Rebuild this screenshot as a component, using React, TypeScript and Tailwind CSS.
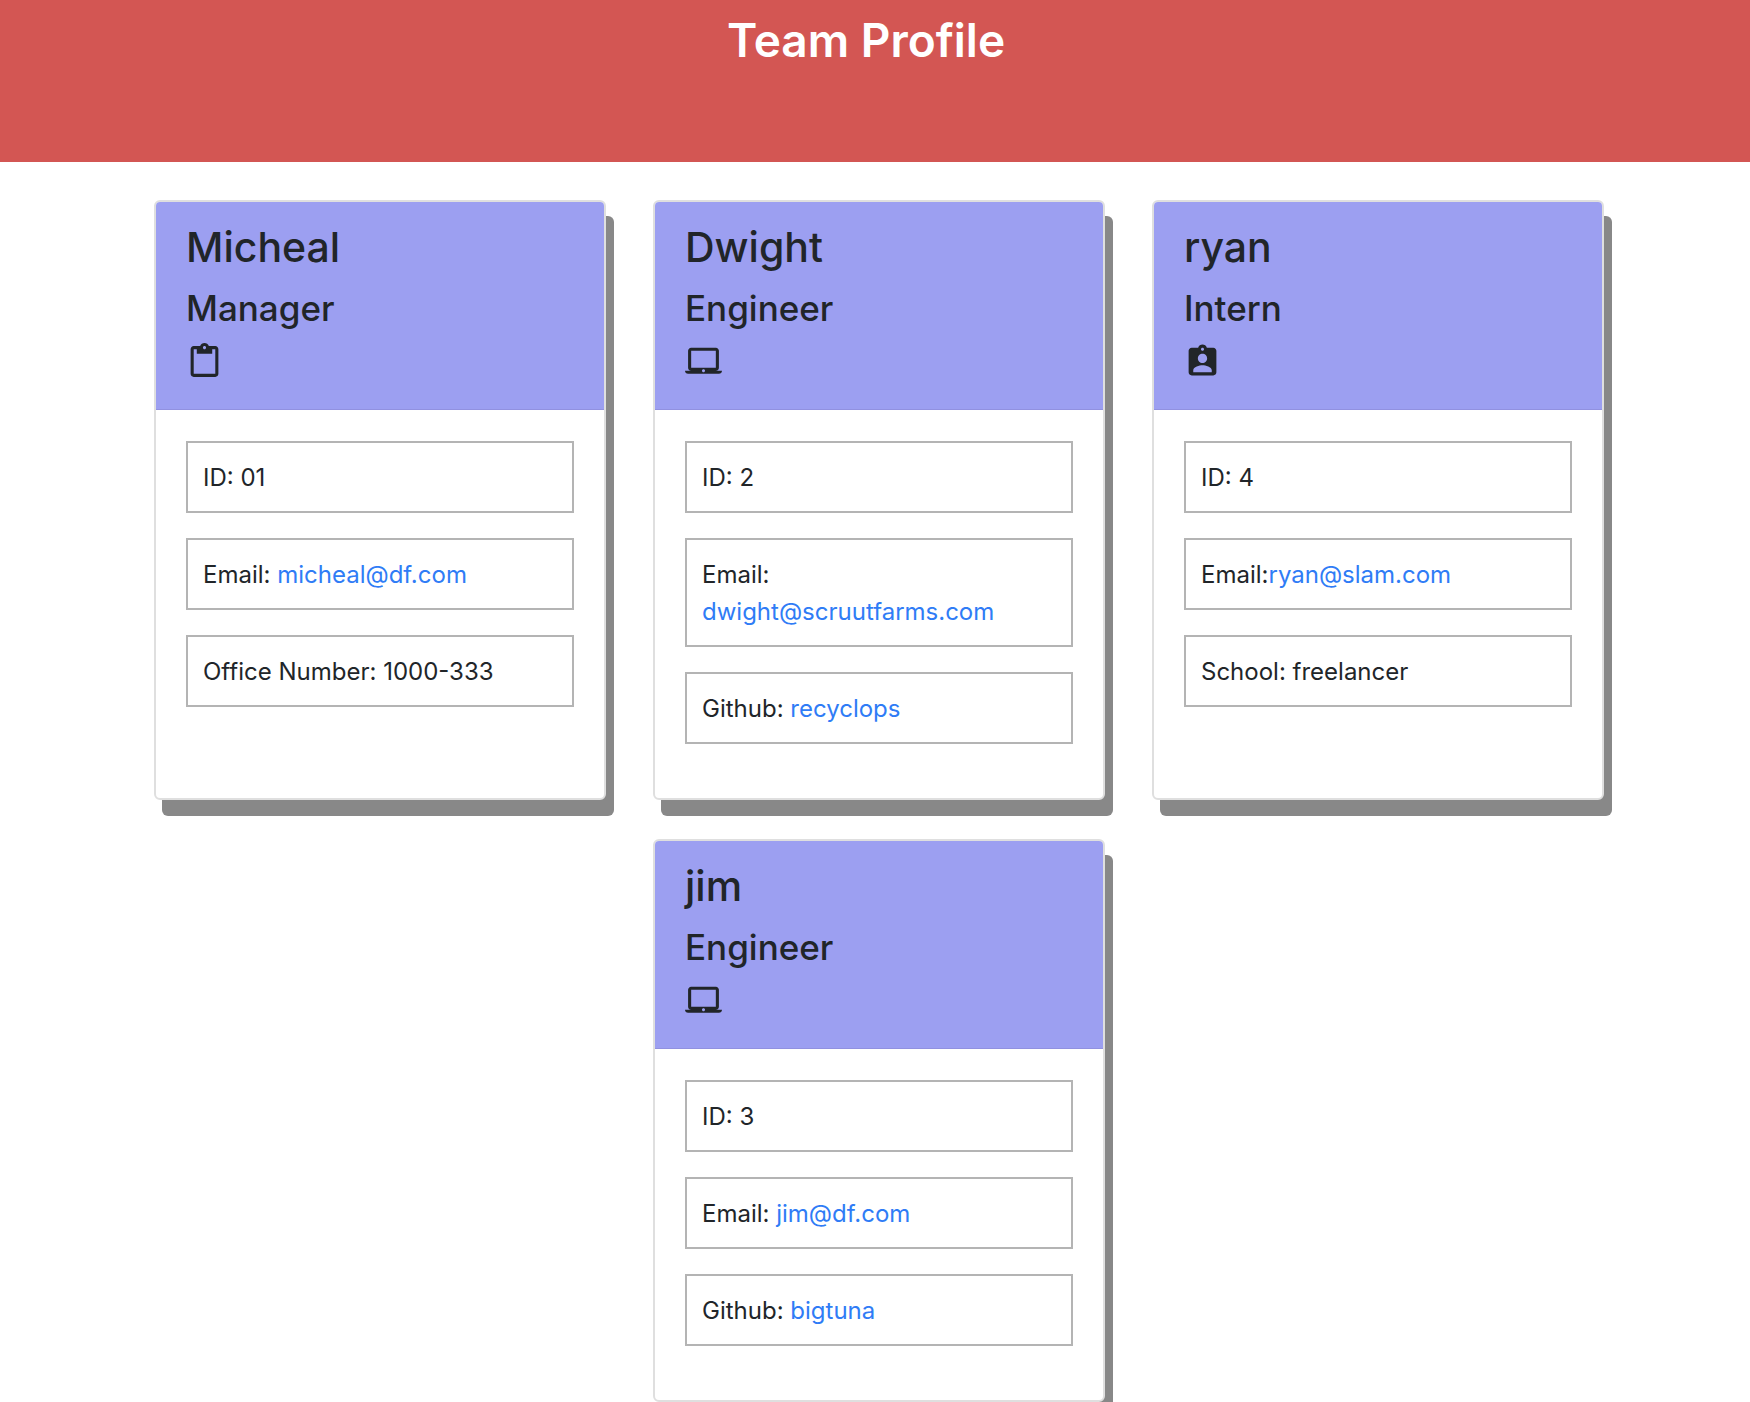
import type { IconType } from "react-icons";
import { MdAssignmentInd, MdContentPaste, MdLaptopMac } from "react-icons/md";

type Field = { label: string; value: string; href?: string };
type Member = { name: string; role: string; icon: IconType; fields: Field[] };

const team: Member[] = [
  {
    name: "Micheal",
    role: "Manager",
    icon: MdContentPaste,
    fields: [
      { label: "ID: ", value: "01" },
      { label: "Email: ", value: "micheal@df.com", href: "mailto:micheal@df.com" },
      { label: "Office Number: ", value: "1000-333" },
    ],
  },
  {
    name: "Dwight",
    role: "Engineer",
    icon: MdLaptopMac,
    fields: [
      { label: "ID: ", value: "2" },
      { label: "Email: ", value: "dwight@scruutfarms.com", href: "mailto:dwight@scruutfarms.com" },
      { label: "Github: ", value: "recyclops", href: "https://github.com/recyclops" },
    ],
  },
  {
    name: "ryan",
    role: "Intern",
    icon: MdAssignmentInd,
    fields: [
      { label: "ID: ", value: "4" },
      { label: "Email:", value: "ryan@slam.com", href: "mailto:ryan@slam.com" },
      { label: "School: ", value: "freelancer" },
    ],
  },
  {
    name: "jim",
    role: "Engineer",
    icon: MdLaptopMac,
    fields: [
      { label: "ID: ", value: "3" },
      { label: "Email: ", value: "jim@df.com", href: "mailto:jim@df.com" },
      { label: "Github: ", value: "bigtuna", href: "https://github.com/bigtuna" },
    ],
  },
];

function MemberCard({ member }: { member: Member }) {
  const Icon = member.icon;
  return (
    <article className="w-[452px] rounded-md border-2 border-[#dfdfdf] bg-white shadow-[8px_16px_0_#888888]">
      <header className="rounded-t-sm border-b border-[#9191e0] bg-[#9c9ff1] px-[30px] pt-[18px] pb-[29px]">
        <h2 className="text-[41px] leading-[54px] font-medium">{member.name}</h2>
        <h3 className="mt-[11px] text-[35px] leading-[46px] font-medium">{member.role}</h3>
        <Icon className="mt-3 size-[37px]" aria-hidden="true" />
      </header>
      <ul className="flex flex-col gap-[25px] px-[30px] pt-[31px] pb-[54px]">
        {member.fields.map((field) => (
          <li
            key={field.label}
            className="border-2 border-[#b4b4b4] px-[15px] pt-4 pb-[15px] text-[24px] leading-[37px]"
          >
            {field.label}
            {field.href ? (
              <a href={field.href} className="text-[#2f7cf6]">
                {field.value}
              </a>
            ) : (
              field.value
            )}
          </li>
        ))}
      </ul>
    </article>
  );
}

export default function App() {
  return (
    <div className="min-h-screen bg-white font-[Inter,sans-serif] text-[#212529]">
      <header className="bg-[#d35653] pt-2.5 pr-[18px] pb-[92px] text-center text-white">
        <h1 className="text-[46px] leading-[60px] font-semibold">Team Profile</h1>
      </header>
      <main className="flex flex-wrap justify-center gap-x-[47px] gap-y-[39px] pt-[38px] pl-2">
        {team.map((member) => (
          <MemberCard key={member.name} member={member} />
        ))}
      </main>
    </div>
  );
}
